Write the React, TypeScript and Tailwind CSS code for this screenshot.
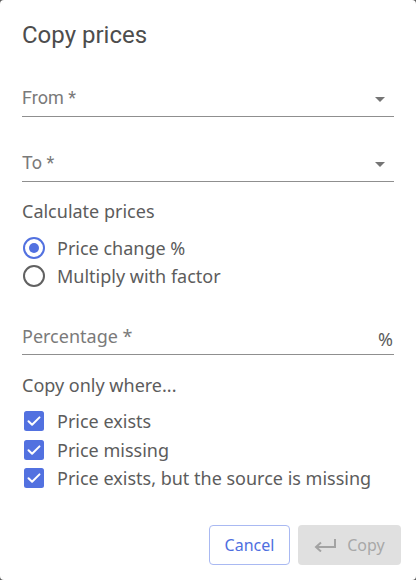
import React from "react";

const plex = { fontFamily: '"Noto Sans", "Open Sans", sans-serif' };
const roboto = { fontFamily: 'Roboto, "Liberation Sans", sans-serif' };

function SelectField({ label, className }: { label: string; className: string }) {
  return (
    <div className={`flex items-center justify-between h-[24px] pb-[6px] box-content border-b border-[#8f8f8f] ${className}`}>
      <span className="text-[18px] leading-6 text-[#7a7a7a]" style={roboto}>
        {label}
      </span>
      <svg width="10" height="5" viewBox="0 0 10 5" className="mr-[9px] mt-[2px]">
        <path d="M0 0h10L5 5z" fill="#757575" />
      </svg>
    </div>
  );
}

function Radio({ checked, label }: { checked: boolean; label: string }) {
  return (
    <label className="flex items-center h-[28px] gap-[11px]">
      <svg width="24" height="24" viewBox="0 0 24 24">
        <circle cx="12" cy="12" r="10" fill="none" stroke={checked ? "#5271e0" : "#616161"} strokeWidth="2" />
        {checked && <circle cx="12" cy="12" r="5" fill="#5271e0" />}
      </svg>
      <span className="text-[18px] leading-6 text-[#5c5c5c]">{label}</span>
    </label>
  );
}

function Check({ label }: { label: string }) {
  return (
    <label className="flex items-center h-[28.5px] gap-[11px]">
      <svg width="24" height="24" viewBox="0 0 24 24">
        <rect x="2" y="2" width="20" height="20" rx="2.5" fill="#5271e0" />
        <path d="M6.5 12.2l3.6 3.6 7.4-7.4" fill="none" stroke="#fff" strokeWidth="2" strokeLinecap="round" strokeLinejoin="round" />
      </svg>
      <span className="text-[18px] leading-6 text-[#5c5c5c]">{label}</span>
    </label>
  );
}

export default function App() {
  return (
    <div className="w-[416px] h-[580px] bg-[#5c5c5c]">
      <div className="w-full h-full bg-white rounded-[4px] flex flex-col pl-[22px] pr-[22px]" style={plex}>
        {/* Title */}
        <h2 className="pt-[19px] text-[24px] leading-8 font-normal text-[#4d4d4d]" style={roboto}>
          Copy prices
        </h2>

        <SelectField label="From *" className="mt-[35px]" />
        <SelectField label="To *" className="mt-[34px]" />

        <div className="mt-[17px] text-[18px] leading-6 text-[#5c5c5c]">Calculate prices</div>

        <div className="mt-[11px] flex flex-col">
          <Radio checked label="Price change %" />
          <Radio checked={false} label="Multiply with factor" />
        </div>

        <div className="mt-[34px] flex items-center justify-between h-[24px] pb-[6px] box-content border-b border-[#8f8f8f]">
          <span className="text-[18px] leading-6 text-[#7a7a7a]">Percentage *</span>
          <span className="text-[18px] leading-6 text-[#5c5c5c] mr-[1px] mt-[6px]">%</span>
        </div>

        <div className="mt-[18px] text-[18px] leading-6 text-[#5c5c5c]">Copy only where...</div>

        <div className="mt-[10px] flex flex-col">
          <Check label="Price exists" />
          <Check label="Price missing" />
          <Check label="Price exists, but the source is missing" />
        </div>

        {/* Actions */}
        <div className="mt-auto mb-[15px] flex justify-end gap-[8px] -mr-[7px]">
          <button className="w-[81px] h-[40px] rounded-[4px] border border-[#a9b9f2] text-[16px] text-[#4f6fdf]">
            Cancel
          </button>
          <button className="w-[103px] h-[40px] rounded-[4px] bg-[#e0e0e0] flex items-center justify-center gap-[11px] text-[16px] text-[#a8a8a8]">
            <svg width="22" height="13" viewBox="0 0 22 13">
              <path d="M21 0v8H3" fill="none" stroke="#a3a3a3" strokeWidth="2" />
              <path d="M7 3.5L2 8l5 4.5" fill="none" stroke="#a3a3a3" strokeWidth="2" />
            </svg>
            Copy
          </button>
        </div>
      </div>
    </div>
  );
}
